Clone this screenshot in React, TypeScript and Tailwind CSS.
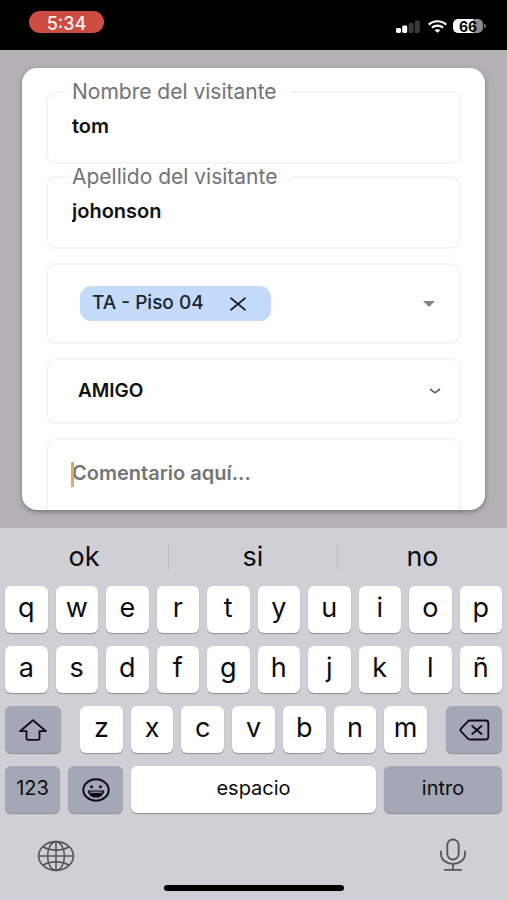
import type React from "react"
import { useState } from "react"

const topRow = ["q", "w", "e", "r", "t", "y", "u", "i", "o", "p"]
const middleRow = ["a", "s", "d", "f", "g", "h", "j", "k", "l", "ñ"]
const bottomRow = ["z", "x", "c", "v", "b", "n", "m"]
const suggestions = ["ok", "si", "no"]

const StatusBar: React.FC = () => (
  <header className="flex h-[50px] shrink-0 items-start justify-between bg-black pt-[11px] pr-[21px] pl-[29px]">
    <span className="flex h-[22px] w-[75px] items-center justify-center rounded-full bg-[#cb4d42] pt-0.5 text-[18px] font-medium text-[#fff0ee]">
      5:34
    </span>
    <div className="flex h-[30px] items-center gap-2">
      <svg width="24" height="13" viewBox="0 0 24 13">
        <rect x="0" y="8" width="5" height="5" rx="1.4" fill="#fff" />
        <rect x="6.2" y="5.5" width="5" height="7.5" rx="1.4" fill="#fff" />
        <rect x="12.6" y="3" width="5" height="10" rx="1.4" fill="#3b3b3b" />
        <rect x="18.8" y="0.5" width="5" height="12.5" rx="1.4" fill="#3b3b3b" />
      </svg>
      <svg width="19" height="13" viewBox="0 0 19 13" fill="none" stroke="#fff" strokeWidth="2.2">
        <path d="M0.8 4.6C5.6 0.1 13.4 0.1 18.2 4.6" />
        <path d="M4 7.7C7.1 5 11.9 5 15 7.7" />
        <path d="M9.5 12.7L6.6 10.2C8.2 8.9 10.8 8.9 12.4 10.2Z" fill="#fff" stroke="none" />
      </svg>
      <div className="-ml-0.5 flex items-center">
        <span className="flex h-[14px] w-[30px] items-center justify-center rounded-[5px] bg-linear-to-r from-white from-66% to-[#8a8a8a] to-66% text-[14px] font-bold text-black">
          66
        </span>
        <span className="ml-px h-1 w-0.5 rounded-r-full bg-[#777]" />
      </div>
    </div>
  </header>
)

interface TextFieldProps {
  id: string
  label: string
  value: string
  onChange: (value: string) => void
}

const TextField: React.FC<TextFieldProps> = ({ id, label, value, onChange }) => (
  <fieldset className="h-[83px] rounded-[9px] border-2 border-[#f5f5f7] px-[19px]">
    <legend className="h-[22px] pr-[14px] pl-[5px] text-[21px] leading-[22px] text-[#727278]">
      <label htmlFor={id}>{label}</label>
    </legend>
    <input
      id={id}
      type="text"
      value={value}
      onChange={(e) => onChange(e.target.value)}
      className="mt-[9px] block h-7 w-full bg-transparent px-[5px] text-[20px] font-semibold text-[#111] outline-none"
    />
  </fieldset>
)

interface KeyProps {
  children: React.ReactNode
  label?: string
  className?: string
}

const Key: React.FC<KeyProps> = ({ children, label, className = "bg-white text-[27px]" }) => (
  <button
    type="button"
    aria-label={label}
    className={`flex h-[47px] items-center justify-center rounded-md pb-[3px] text-[#0c0c10] shadow-[0_1px_1px_#8b8c92] ${className}`}
  >
    {children}
  </button>
)

const ShiftIcon = () => (
  <svg width="30" height="24" viewBox="0 0 30 24" fill="none" stroke="#0c0c18" strokeWidth="1.8" strokeLinejoin="round" className="mt-[3px]">
    <path d="M15 2.2L28 13.2H21.5V20.2Q21.5 21.8 19.8 21.8H10.2Q8.5 21.8 8.5 20.2V13.2H2Z" />
  </svg>
)

const DeleteIcon = () => (
  <svg width="31" height="22" viewBox="0 0 31 22" fill="none" stroke="#0c0c18" strokeWidth="1.8" strokeLinejoin="round" strokeLinecap="round" className="mt-[3px]">
    <path d="M11 1.5H26.5Q29.3 1.5 29.3 4V18Q29.3 20.5 26.5 20.5H11Q9.8 20.5 8.9 19.7L2 12.4Q0.8 11 2 9.6L8.9 2.3Q9.8 1.5 11 1.5Z" />
    <path d="M13.2 7L22.5 15M22.5 7L13.2 15" />
  </svg>
)

const SmileIcon = () => (
  <svg width="28" height="24" viewBox="0 0 28 24" fill="none" stroke="#0c0c18" className="mt-[3px]">
    <ellipse cx="14" cy="12" rx="12.7" ry="10.7" strokeWidth="2" />
    <ellipse cx="9.6" cy="8.7" rx="1.5" ry="1.5" fill="#0c0c18" stroke="none" />
    <ellipse cx="18.4" cy="8.7" rx="1.5" ry="1.5" fill="#0c0c18" stroke="none" />
    <path d="M5.8 12.4H22.2C21.8 17 18.4 19.6 14 19.6S6.2 17 5.8 12.4Z" fill="#0c0c18" stroke="none" />
    <path d="M8 14.2H20" strokeWidth="1.2" stroke="#a4a8b4" />
  </svg>
)

const GlobeIcon = () => (
  <svg width="38" height="32" viewBox="0 0 38 32" fill="none" stroke="#55565b" strokeWidth="1.6">
    <ellipse cx="19" cy="16" rx="17.4" ry="14.4" />
    <ellipse cx="19" cy="16" rx="8.4" ry="14.4" />
    <path d="M19 1.6V30.4M1.6 16H36.4" />
    <path d="M5.8 6.5C13 11.3 25 11.3 32.2 6.5M5.8 25.5C13 20.7 25 20.7 32.2 25.5" />
  </svg>
)

const MicIcon = () => (
  <svg width="28" height="34" viewBox="0 0 28 34" fill="none" stroke="#55565b" strokeWidth="1.8" strokeLinecap="round">
    <rect x="8.3" y="1.5" width="11.4" height="20" rx="5.7" />
    <path d="M2 13.5V16C2 21.8 7.2 25.8 14 25.8S26 21.8 26 16V13.5" />
    <path d="M14 25.8V31.8M5.8 31.8H22.2" />
  </svg>
)

const Keyboard: React.FC = () => (
  <section className="shrink-0 bg-[#cfcfd6] text-[#0c0c10]">
    <div className="grid h-[58px] grid-cols-3 items-center divide-x divide-[#bdbdc4]">
      {suggestions.map((word) => (
        <button key={word} type="button" className="h-[28px] text-[27px] leading-[26px]">
          {word}
        </button>
      ))}
    </div>

    <div className="flex flex-col gap-[13px] px-[5px]">
      <div className="grid grid-cols-10 gap-2">
        {topRow.map((letter) => (
          <Key key={letter}>{letter}</Key>
        ))}
      </div>
      <div className="grid grid-cols-10 gap-2">
        {middleRow.map((letter) => (
          <Key key={letter}>{letter}</Key>
        ))}
      </div>
      <div className="flex gap-[19px]">
        <Key label="Mayúsculas" className="w-[56px] bg-[#a4a8b4]">
          <ShiftIcon />
        </Key>
        <div className="grid flex-1 grid-cols-7 gap-2">
          {bottomRow.map((letter) => (
            <Key key={letter}>{letter}</Key>
          ))}
        </div>
        <Key label="Borrar" className="w-[56px] bg-[#a4a8b4]">
          <DeleteIcon />
        </Key>
      </div>
      <div className="flex gap-2">
        <Key className="w-[55px] bg-[#a4a8b4] text-[20px]">123</Key>
        <Key label="Emoji" className="w-[55px] bg-[#a4a8b4]">
          <SmileIcon />
        </Key>
        <Key className="flex-1 bg-white text-[20px]">espacio</Key>
        <Key className="w-[118px] bg-[#a4a8b4] text-[20px]">intro</Key>
      </div>
    </div>

    <div className="flex h-[72px] items-start justify-between pt-[25px] pr-10 pl-[37px]">
      <button type="button" aria-label="Cambiar teclado" className="pt-0.5">
        <GlobeIcon />
      </button>
      <button type="button" aria-label="Dictado">
        <MicIcon />
      </button>
    </div>
    <div className="pb-[9px]">
      <div className="mx-auto h-1.5 w-[180px] rounded-full bg-black" />
    </div>
  </section>
)

export default function App() {
  const [firstName, setFirstName] = useState("tom")
  const [lastName, setLastName] = useState("johonson")
  const [units, setUnits] = useState(["TA - Piso 04"])
  const [visitType, setVisitType] = useState("AMIGO")
  const [comment, setComment] = useState("")

  return (
    <div className="flex h-screen flex-col overflow-hidden bg-[#b3b1b4] font-['Inter',sans-serif]">
      <StatusBar />

      <main className="flex min-h-0 flex-1 flex-col px-[22px] pt-[18px] pb-[18px]">
        <form className="min-h-0 flex-1 overflow-hidden rounded-[15px] bg-[#fefefe] px-6 pt-[13px] shadow-[0_2px_5px_#77777a]">
          <div className="flex flex-col gap-[14px]">
            <div className="flex flex-col gap-0.5">
              <TextField id="firstName" label="Nombre del visitante" value={firstName} onChange={setFirstName} />
              <TextField id="lastName" label="Apellido del visitante" value={lastName} onChange={setLastName} />
            </div>

            <div className="flex h-[81px] items-center justify-between rounded-[9px] border-2 border-[#f5f5f7] pr-6 pl-8">
              <div className="flex gap-2">
                {units.map((unit) => (
                  <span
                    key={unit}
                    className="flex h-[35px] w-[191px] items-center rounded-[11px] bg-[#c3dbf9] pl-3 text-[19px] font-medium text-[#1b2430]"
                  >
                    {unit}
                    <button
                      type="button"
                      aria-label={`Quitar ${unit}`}
                      onClick={() => setUnits(units.filter((u) => u !== unit))}
                      className="mr-6 ml-auto"
                    >
                      <svg width="18" height="14" viewBox="0 0 18 14" stroke="#1b2430" strokeWidth="1.8" strokeLinecap="round">
                        <path d="M2 1.3L16 12.7M16 1.3L2 12.7" />
                      </svg>
                    </button>
                  </span>
                ))}
              </div>
              <button type="button" aria-label="Abrir lista">
                <svg width="12" height="6" viewBox="0 0 12 6" fill="#858585">
                  <path d="M0 0H12L6 6Z" />
                </svg>
              </button>
            </div>

            <div className="relative h-[66px] rounded-[9px] border-2 border-[#f5f5f7]">
              <select
                aria-label="Tipo de visita"
                value={visitType}
                onChange={(e) => setVisitType(e.target.value)}
                className="h-full w-full appearance-none bg-transparent px-[30px] text-[19px] font-semibold text-[#111] outline-none"
              >
                <option value="AMIGO">AMIGO</option>
              </select>
              <svg
                width="12"
                height="6"
                viewBox="0 0 12 6"
                fill="none"
                stroke="#5f5f5f"
                strokeWidth="1.6"
                className="pointer-events-none absolute top-7 right-[18px]"
              >
                <path d="M1 1L6 4.8L11 1" />
              </svg>
            </div>

            <div className="relative rounded-[9px] border-2 border-[#f5f5f7]">
              <textarea
                aria-label="Comentario"
                rows={4}
                placeholder="Comentario aquí..."
                value={comment}
                onChange={(e) => setComment(e.target.value)}
                className="block w-full resize-none bg-transparent px-6 pt-5 text-[20px] leading-[26px] font-semibold text-[#111] outline-none placeholder:text-[#757575]"
              />
              {comment === "" && <span className="absolute top-[22px] left-[23px] h-[25px] w-[3px] bg-[#e0a665]" />}
            </div>
          </div>
        </form>
      </main>

      <Keyboard />
    </div>
  )
}
